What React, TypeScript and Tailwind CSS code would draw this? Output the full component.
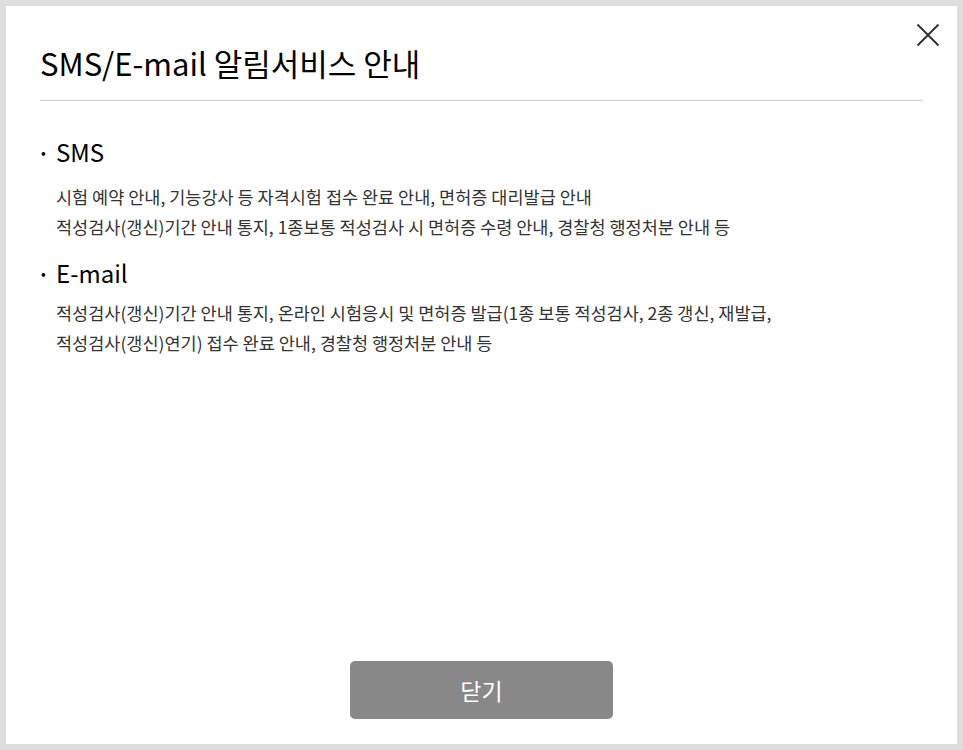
import React from "react";

const font = { fontFamily: '"Noto Sans CJK KR", "Noto Sans", sans-serif' };

const sections = [
  {
    title: "SMS",
    pad: "pt-[15px]",
    lines: [
      "시험 예약 안내, 기능강사 등 자격시험 접수 완료 안내, 면허증 대리발급 안내",
      "적성검사(갱신)기간 안내 통지, 1종보통 적성검사 시 면허증 수령 안내, 경찰청 행정처분 안내 등",
    ],
  },
  {
    title: "E-mail",
    pad: "pt-[10px]",
    lines: [
      "적성검사(갱신)기간 안내 통지, 온라인 시험응시 및 면허증 발급(1종 보통 적성검사, 2종 갱신, 재발급,",
      "적성검사(갱신)연기) 접수 완료 안내, 경찰청 행정처분 안내 등",
    ],
  },
];

export default function App() {
  return (
    <div className="w-[963px] h-[750px] bg-[#dedede] p-[6px]" style={font}>
      <div className="relative w-full h-full bg-white flex flex-col px-[34px]">
        {/* close */}
        <button className="absolute top-[17px] right-[17px] w-[24px] h-[24px] flex items-center justify-center">
          <svg width="24" height="24" viewBox="0 0 24 24">
            <path d="M1.5 1.5 L22.5 22.5 M22.5 1.5 L1.5 22.5" stroke="#333" strokeWidth="2" fill="none" />
          </svg>
        </button>

        <h1 className="pt-[38px] pb-[18px] text-[31px] leading-[38px] text-black border-b border-[#cccccc] font-normal">
          SMS/E-mail 알림서비스 안내
        </h1>

        <div className="flex flex-col gap-[16px] pt-[36px]">
          {sections.map((s) => (
            <div key={s.title}>
              <div className="flex items-center text-[24px] leading-[30px] text-black">
                <span className="w-[16px] text-[14px] pl-[1px]">•</span>
                <span>{s.title}</span>
              </div>
              <div className={`pl-[16px] ${s.pad} text-[17.5px] leading-[30px] text-[#333]`}>
                {s.lines.map((l) => (
                  <p key={l}>{l}</p>
                ))}
              </div>
            </div>
          ))}
        </div>

        <div className="mt-auto flex justify-center pb-[25px]">
          <button className="w-[263px] h-[58px] rounded-[5px] bg-[#888888] text-white text-[23px]">
            닫기
          </button>
        </div>
      </div>
    </div>
  );
}
